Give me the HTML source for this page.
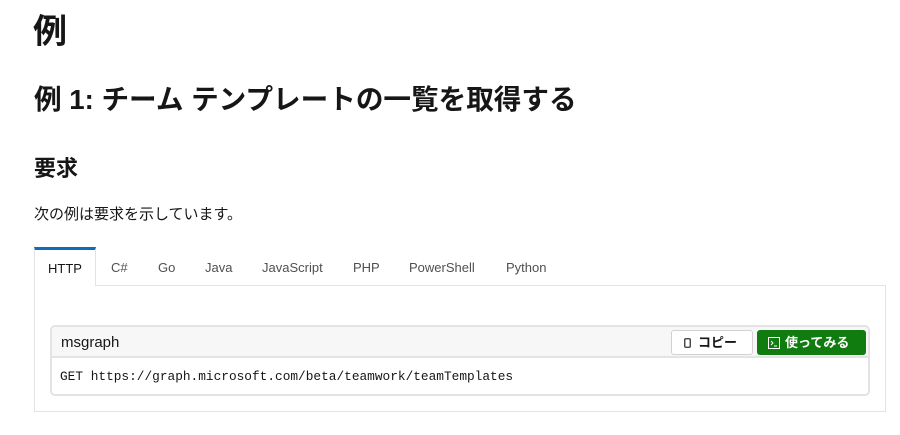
<!DOCTYPE html>
<html><head><meta charset="utf-8"><style>
*{margin:0;padding:0;box-sizing:border-box}
body{width:900px;height:435px;background:#fff;font-family:"Liberation Sans","Noto Sans CJK JP",sans-serif;color:#161616;position:relative;overflow:hidden}
h1{position:absolute;left:33px;top:10px;font-size:34px;font-weight:bold;line-height:44px}
h2{position:absolute;left:34px;top:82px;font-size:27.6px;font-weight:bold;line-height:36px}
h3{position:absolute;left:34px;top:153px;font-size:22px;font-weight:bold;line-height:32px}
p{position:absolute;left:34px;top:204px;font-size:15px;line-height:22px}
.tabs{position:absolute;left:34px;top:247px;height:39px;font-size:13px;color:#505050}
.tab{position:absolute;top:0;line-height:42px;height:39px;white-space:nowrap}
.tab.on{left:0;border-top:3px solid #0f6cbd;border-left:1px solid #e3e3e3;border-right:1px solid #e3e3e3;background:#fff;color:#161616;line-height:38px;padding-left:13px;width:62px}
.panel{position:absolute;left:34px;top:285px;width:852px;height:127px;border:1px solid #e3e3e3}
.cb{position:absolute;left:50px;top:325px;width:820px;height:71px;border:2px solid #e3e3e3;border-radius:5px;overflow:hidden}
.hd{height:31px;background:#f7f7f7;border-bottom:2px solid #e3e3e3;font-size:15px;line-height:31px;padding-left:9px}
.code{font-family:"Liberation Mono",monospace;font-size:12.8px;padding-left:8px;line-height:37px}
.btn{position:absolute;top:3px;height:25px;border-radius:3px;font-size:13px;font-weight:bold;line-height:23px}
.copy{left:619px;width:82px;border:1px solid #d1d1d1;background:#fff;padding-left:26px}
.try{left:705px;width:109px;background:#107c10;color:#fff;padding-left:28px;line-height:25px}
</style></head><body>
<h1>例</h1>
<h2>例 1: チーム テンプレートの一覧を取得する</h2>
<h3>要求</h3>
<p>次の例は要求を示しています。</p>
<div class="panel"></div>
<div class="tabs"><div class="tab on">HTTP</div><div class="tab" style="left:77px">C#</div><div class="tab" style="left:124px">Go</div><div class="tab" style="left:171px">Java</div><div class="tab" style="left:228px">JavaScript</div><div class="tab" style="left:319px">PHP</div><div class="tab" style="left:375px">PowerShell</div><div class="tab" style="left:472px">Python</div></div>
<div class="cb"><div class="hd">msgraph</div><div class="code">GET https://graph.microsoft.com/beta/teamwork/teamTemplates</div>
<div class="btn copy"><svg style="position:absolute;left:12px;top:7px" width="7" height="10"><rect x="0.75" y="0.75" width="5.5" height="8.5" rx="1" fill="none" stroke="#333" stroke-width="1.3"/></svg>コピー</div>
<div class="btn try"><svg style="position:absolute;left:11px;top:7px" width="12" height="12"><rect x="0.5" y="0.5" width="11" height="11" fill="none" stroke="#fff"/><path d="M3 4l2 2-2 2M6 9h3" fill="none" stroke="#fff"/></svg>使ってみる</div>
</div>
</body></html>
